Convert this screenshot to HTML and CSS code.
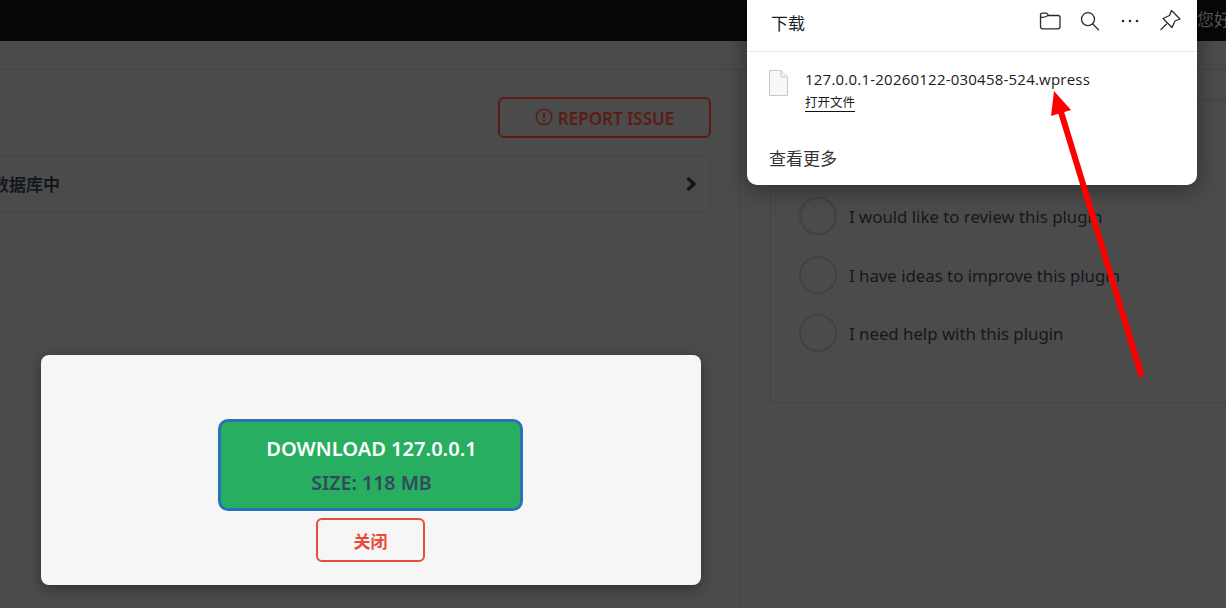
FILE: index.html
```html
<!DOCTYPE html>
<html lang="zh">
<head>
<meta charset="utf-8">
<title>Download backup</title>
<link rel="stylesheet" href="styles.css">
</head>
<body>
<header class="topbar"><span class="greeting">您好</span></header>
<div class="subbar"></div>
<div class="content">
  <main class="main">
    <div class="actions">
      <button class="report" type="button">
        <svg class="report-icon" viewBox="0 0 18 18"><circle cx="9" cy="9" r="7.8"/><path d="M9 4.500v5.600"/><path d="M9 12.200v1.600"/></svg>
        REPORT ISSUE
      </button>
    </div>
    <div class="accordion">
      <span class="accordion-title">数据库中</span>
      <svg class="chevron" viewBox="0 0 12 16"><path d="M2.500 2L9 8l-6.500 6"/></svg>
    </div>
  </main>
  <aside class="side">
    <div class="card">
      <label class="choice"><span class="radio"></span><span class="choice-text">I would like to review this plugin</span></label>
      <label class="choice"><span class="radio"></span><span class="choice-text">I have ideas to improve this plugin</span></label>
      <label class="choice"><span class="radio"></span><span class="choice-text">I need help with this plugin</span></label>
    </div>
  </aside>
</div>

<section class="modal">
  <button class="download" type="button">
    <span class="download-title">DOWNLOAD 127.0.0.1</span>
    <span class="download-size">SIZE: 118 MB</span>
  </button>
  <button class="close" type="button">关闭</button>
</section>

<section class="panel">
  <div class="panel-head">
    <span class="panel-title">下载</span>
    <div class="tools">
      <svg class="tool" viewBox="0 0 24 24"><path d="M2.500 8V6.200C2.500 5 3.400 4.200 4.500 4.200H8c1 0 1.600.7 2 1.500l.3.8H20c1.100 0 2 .9 2 2v9.300c0 1.100-.9 2-2 2H4.500c-1.100 0-2-.9-2-2z"/><path d="M2.500 8.500c2 0 5-.1 7.800-2"/></svg>
      <svg class="tool" viewBox="0 0 24 24"><circle cx="10" cy="10.200" r="6.500"/><path d="M14.700 14.900l5.800 5.800"/></svg>
      <svg class="tool tool-fill" viewBox="0 0 24 24"><circle cx="5" cy="12" r="1.300"/><circle cx="12" cy="12" r="1.300"/><circle cx="19" cy="12" r="1.300"/></svg>
      <svg class="tool" viewBox="0 0 24 24"><path d="M13.500 1.500l8.500 8.500-5 2-3 6.500-9-9 6.500-3z"/><path d="M8.500 15l-5.500 5.500"/></svg>
    </div>
  </div>
  <div class="file">
    <svg class="file-icon" viewBox="0 0 19 26"><path class="sheet" d="M.5.500H12L18.500 7V25.500H.5z"/><path class="fold" d="M12 .5V7h6.500"/></svg>
    <div class="file-text">
      <div class="file-name">127.0.0.1-20260122-030458-524.wpress</div>
      <a class="file-open">打开文件</a>
    </div>
  </div>
  <div class="more">查看更多</div>
</section>

<svg class="arrow" viewBox="0 0 1226 608"><line x1="1141" y1="374" x2="1061" y2="112"/><polygon points="1054,91 1071,110 1051,116"/></svg>
</body>
</html>
```
FILE: styles.css
```css
* { box-sizing: border-box; }
html, body { margin: 0; height: 608px; overflow: hidden; }
body {
  background: #4b4b4b;
  font-family: "Noto Sans", "Noto Sans CJK SC", sans-serif;
  color: #1d2327;
}
button { font-family: inherit; cursor: pointer; }

.topbar {
  height: 41px;
  background: #070707;
  display: flex;
  justify-content: flex-end;
  align-items: center;
  overflow: hidden;
}
.greeting { color: #575757; font-size: 17px; margin-right: -5px; margin-top: -4px; white-space: nowrap; }
.subbar { height: 29px; border-bottom: 1px solid #434343; }

.content { display: flex; height: 538px; }
.main {
  width: 740px;
  flex: none;
  border-right: 1px solid #434343;
  padding: 27px 28px 0 0;
  overflow: hidden;
}
.actions { display: flex; justify-content: flex-end; }
.report {
  width: 213px;
  height: 41px;
  border: 2px solid #5c1b14;
  border-radius: 6px;
  background: transparent;
  color: #5c1b14;
  font-size: 17px;
  font-weight: 600;
  display: flex;
  align-items: center;
  justify-content: center;
  gap: 5px;
  padding: 1px 0 0;
}
.report-icon { width: 18px; height: 18px; margin-top: -2px; fill: none; stroke: #5c1b14; stroke-width: 1.500; }
.report-icon path { stroke-width: 2; }
.accordion {
  margin: 18px 0 0 -20px;
  height: 56px;
  border: 1px solid #434343;
  border-radius: 6px;
  display: flex;
  align-items: center;
  justify-content: space-between;
  padding: 0 13px 0 11px;
}
.accordion-title { font-size: 17px; font-weight: 700; color: #14181d; margin-top: -2px; }
.chevron { width: 12px; height: 16px; fill: none; stroke: #11151a; stroke-width: 3.200; }

.side { flex: 1; padding: 29px 0 0 30px; min-width: 0; }
.card {
  width: 500px;
  height: 304px;
  border: 1px solid #434343;
  border-radius: 4px;
  padding: 97px 0 0 28px;
}
.choice {
  display: flex;
  align-items: center;
  height: 38px;
  margin-bottom: 20.500px;
  gap: 12px;
  font-size: 16.800px;
  color: #14181d;
}
.choice-text { margin-top: 1px; }
.radio {
  width: 38px;
  height: 38px;
  flex: none;
  border: 2px solid #414141;
  border-radius: 50%;
}

.modal {
  position: absolute;
  left: 41px;
  top: 355px;
  width: 660px;
  height: 230px;
  background: #f6f6f6;
  border-radius: 8px;
  box-shadow: 0 4px 14px rgba(0, 0, 0, .35);
  display: flex;
  flex-direction: column;
  align-items: center;
  padding: 64px 1px 0 0;
  gap: 7px;
}
.download {
  width: 305px;
  height: 92px;
  flex: none;
  border: 3px solid #2a72b5;
  border-radius: 10px;
  background: #27ae60;
  display: flex;
  flex-direction: column;
  align-items: center;
  justify-content: center;
  gap: 6px;
  padding: 1px 0 0 2px;
}
.download-title { color: #fff; font-size: 20.100px; font-weight: 600; line-height: 28px; }
.download-size { color: #34495e; font-size: 19.600px; font-weight: 600; line-height: 28px; }
.close {
  width: 109px;
  height: 44px;
  flex: none;
  border: 2px solid #e74c3c;
  border-radius: 6px;
  background: transparent;
  color: #e74c3c;
  font-size: 17px;
  font-weight: 700;
  padding: 0;
}

.panel {
  position: absolute;
  left: 747px;
  top: 0;
  width: 450px;
  height: 185px;
  background: #fff;
  border-radius: 0 0 10px 10px;
  box-shadow: 0 4px 22px rgba(0, 0, 0, .4);
  color: #1f1f1f;
}
.panel-head {
  height: 52px;
  border-bottom: 1px solid #e8e8e8;
  display: flex;
  align-items: center;
  justify-content: space-between;
  padding: 0 7px 0 24px;
}
.panel-title { font-size: 17px; margin-top: -7px; }
.tools { display: flex; margin-top: -9px; }
.tool { width: 24px; height: 24px; margin: 0 8px; fill: none; stroke: #2b2b2b; stroke-width: 1.300; stroke-linejoin: round; stroke-linecap: round; }
.tool-fill { fill: #2b2b2b; stroke: none; }

.file { display: flex; gap: 17px; padding: 18px 0 0 22px; }
.file-icon { width: 19px; height: 26px; flex: none; }
.sheet { fill: #f8f8f8; stroke: #c9c9c9; }
.fold { fill: none; stroke: #c9c9c9; }
.file-text { margin-top: -1px; }
.file-name { font-size: 15px; letter-spacing: .22px; line-height: 20px; color: #202020; font-family: "Open Sans", "Noto Sans CJK SC", sans-serif; }
.file-open {
  display: inline-block;
  font-size: 12.500px;
  line-height: 17px;
  margin-top: 5px;
  color: #202020;
  border-bottom: 1px solid #111;
}
.more { margin: 35px 0 0 22px; font-size: 17px; line-height: 24px; color: #333; }

.arrow { position: absolute; left: 0; top: 0; width: 1226px; height: 608px; pointer-events: none; }
.arrow line { stroke: #fe0000; stroke-width: 6; stroke-linecap: round; }
.arrow polygon { fill: #fe0000; }
```
